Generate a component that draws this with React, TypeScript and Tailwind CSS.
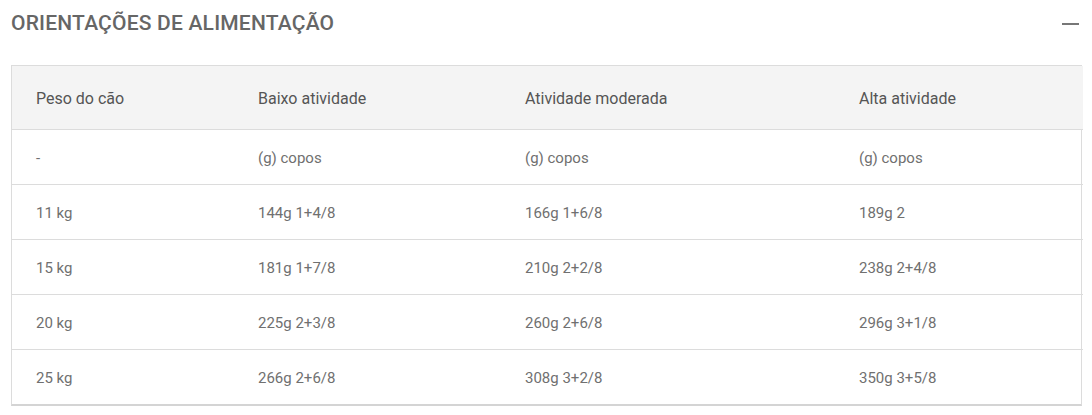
import React from 'react';

const rows = [
  ['-', '(g) copos', '(g) copos', '(g) copos'],
  ['11 kg', '144g 1+4/8', '166g 1+6/8', '189g 2'],
  ['15 kg', '181g 1+7/8', '210g 2+2/8', '238g 2+4/8'],
  ['20 kg', '225g 2+3/8', '260g 2+6/8', '296g 3+1/8'],
  ['25 kg', '266g 2+6/8', '308g 3+2/8', '350g 3+5/8'],
];

const headers = ['Peso do cão', 'Baixo atividade', 'Atividade moderada', 'Alta atividade'];
const widths = ['w-[222px]', 'w-[267px]', 'w-[334px]', 'w-[248px]'];

export default function App() {
  return (
    <div className="w-[1092px] h-[415px] bg-white font-['Roboto',sans-serif] pl-[11px] pr-[10px]">
      {/* Title bar */}
      <div className="flex items-center justify-between h-[46px] pt-[2px]">
        <h2 className="text-[21px] font-medium tracking-[0.2px] text-[#666] uppercase">Orientações de alimentação</h2>
        <span className="block w-[17px] h-[2px] bg-[#777] mr-[3px]" />
      </div>

      {/* Table */}
      <div className="mt-[19px] border border-[#dcdcdc] border-b-2 border-b-[#d4d4d4] w-[1071px]">
        <table className="w-full border-collapse table-fixed">
          <thead>
            <tr className="bg-[#f4f4f4] h-[63px]">
              {headers.map((h, i) => (
                <th key={h} className={`${widths[i]} text-left font-normal text-[16px] text-[#555] pl-[24px] pt-[3px]`}>
                  {h}
                </th>
              ))}
            </tr>
          </thead>
          <tbody>
            {rows.map((r, ri) => (
              <tr key={ri} className="h-[55px] border-t border-[#dcdcdc]">
                {r.map((c, ci) => (
                  <td key={ci} className="text-[15px] text-[#707070] pl-[24px] pt-[3px]">
                    {c}
                  </td>
                ))}
              </tr>
            ))}
          </tbody>
        </table>
      </div>
    </div>
  );
}
